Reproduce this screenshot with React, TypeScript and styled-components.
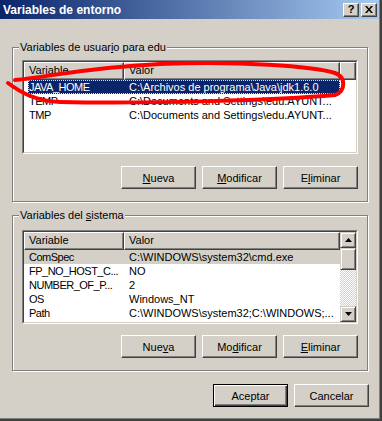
import React from 'react';
import styled, { createGlobalStyle, css } from 'styled-components';

const GlobalStyle = createGlobalStyle`
  html, body { margin: 0; padding: 0; background: #d4d0c8; }
  body { font-family: "Liberation Sans", Arial, sans-serif; font-size: 11px; color: #000; }
  * { box-sizing: border-box; }
`;

const Frame = styled.div`
  position: relative;
  width: 382px;
  height: 421px;
  background: #d4d0c8;
  border-right: 2px solid #404040;
  border-bottom: 2px solid #404040;
`;

const Inner = styled.div`
  height: 100%;
  display: flex;
  flex-direction: column;
  border-right: 1px solid #808080;
  border-bottom: 1px solid #808080;
`;

const TitleBar = styled.div`
  height: 19px;
  flex: none;
  display: flex;
  align-items: center;
  padding: 0 2px 0 3px;
  background: linear-gradient(to right, #0a246a, #a6caf0);
`;

const TitleText = styled.span`
  color: #fff;
  font-weight: bold;
  font-size: 12px;
  line-height: 14px;
`;

const CaptionButtons = styled.div`
  margin-left: auto;
  display: flex;
  gap: 2px;
`;

const bevel = css`
  background: #d4d0c8;
  border: 1px solid;
  border-color: #fff #404040 #404040 #fff;
  box-shadow: inset -1px -1px 0 #808080, inset 1px 1px 0 #d4d0c8;
`;

const CaptionButton = styled.div`
  ${bevel}
  width: 16px;
  height: 14px;
  display: flex;
  align-items: center;
  justify-content: center;
  font-weight: bold;
  font-size: 11px;
  line-height: 11px;
`;

const Client = styled.div`
  flex: 1;
  display: flex;
  flex-direction: column;
  padding: 28px 10px 0 12px;
`;

const Group = styled.div<{ $top: number; $gap?: number }>`
  position: relative;
  margin-right: 1px;
  margin-top: ${(p) => p.$gap ?? 0}px;
  border: 1px solid #808080;
  box-shadow: 1px 1px 0 #fff, inset 1px 1px 0 #fff;
  padding: ${(p) => p.$top}px 9px 12px 9px;
`;

const GroupLabel = styled.span`
  position: absolute;
  top: -7px;
  left: 6px;
  padding: 0 1px;
  line-height: 13px;
  background: #d4d0c8;
  white-space: nowrap;
`;

const ListOuter = styled.div`
  width: 336px;
  height: 94px;
  border: 1px solid;
  border-color: #808080 #fff #fff #808080;
`;

const ListInner = styled.div`
  height: 100%;
  display: flex;
  border: 1px solid;
  border-color: #404040 #d4d0c8 #d4d0c8 #404040;
  background: #fff;
  overflow: hidden;
`;

const ListBody = styled.div`
  flex: 1;
  min-width: 0;
  display: flex;
  flex-direction: column;
`;

const Header = styled.div`
  height: 18px;
  flex: none;
  display: flex;
  background: #d4d0c8;
`;

const HeaderCell = styled.div<{ $w?: number }>`
  ${(p) => (p.$w ? `width: ${p.$w}px; flex: none;` : 'flex: 1;')}
  height: 18px;
  border: 1px solid;
  border-color: #fff #404040 #404040 #fff;
  box-shadow: inset -1px -1px 0 #808080;
  padding-left: 4px;
  line-height: 15px;
  white-space: nowrap;
  overflow: hidden;
`;

const Row = styled.div<{ $sel?: 'active' | 'inactive' }>`
  position: relative;
  width: 316px;
  height: 14px;
  flex: none;
  display: flex;
  line-height: 14px;
  ${(p) =>
    p.$sel === 'active' &&
    css`
      color: #fff;
      background: linear-gradient(to right, transparent 4px, #0a246a 4px);
      &::after {
        content: '';
        position: absolute;
        left: 4px;
        top: 0;
        right: 0;
        bottom: 0;
        border: 1px dotted #e8e0b0;
      }
    `}
  ${(p) =>
    p.$sel === 'inactive' &&
    css`
      background: #d4d0c8;
    `}
`;

const Cell = styled.div<{ $w: number; $tight?: boolean }>`
  width: ${(p) => p.$w}px;
  flex: none;
  padding-left: 5px;
  white-space: nowrap;
  overflow: hidden;
  letter-spacing: ${(p) => (p.$tight ? '-0.5px' : '0')};
`;

const ScrollBar = styled.div`
  width: 16px;
  flex: none;
  display: flex;
  flex-direction: column;
`;

const scrollBevel = css`
  background: #d4d0c8;
  border: 1px solid;
  border-color: #d4d0c8 #404040 #404040 #d4d0c8;
  box-shadow: inset 1px 1px 0 #fff, inset -1px -1px 0 #808080;
`;

const ScrollButton = styled.div`
  ${scrollBevel}
  height: 16px;
  flex: none;
  display: flex;
  align-items: center;
  justify-content: center;
`;

const Thumb = styled.div`
  ${scrollBevel}
  height: 22px;
  flex: none;
`;

const Track = styled.div`
  flex: 1;
  background: repeating-conic-gradient(#d4d0c8 0 25%, #ffffff 0 50%) 0 0 / 2px 2px;
`;

const ButtonRow = styled.div<{ $mt: number }>`
  display: flex;
  justify-content: flex-end;
  gap: 6px;
  margin-top: ${(p) => p.$mt}px;
`;

const Button = styled.button<{ $default?: boolean }>`
  width: 75px;
  height: 23px;
  padding: 0;
  font-family: "Liberation Sans", Arial, sans-serif;
  font-size: 11px;
  color: #000;
  ${bevel}
  ${(p) =>
    p.$default &&
    css`
      border-color: #000;
      box-shadow: inset 1px 1px 0 #fff, inset -1px -1px 0 #404040, inset -2px -2px 0 #808080;
    `}
  u {
    text-underline-offset: 1px;
  }
`;

const Footer = styled.div`
  display: flex;
  justify-content: flex-end;
  gap: 6px;
  margin-top: 13px;
`;

const Annotation = styled.svg`
  position: absolute;
  left: 0;
  top: 0;
  pointer-events: none;
`;

const Arrow = ({ down }: { down?: boolean }) => (
  <svg width="7" height="4" viewBox="0 0 7 4">
    {down ? <path d="M0 0h7L3.5 4z" fill="#000" /> : <path d="M0 4h7L3.5 0z" fill="#000" />}
  </svg>
);

const C1 = 100;
const C2 = 216;

const userVars = [
  { n: 'JAVA_HOME', v: 'C:\\Archivos de programa\\Java\\jdk1.6.0', sel: 'active' as const },
  { n: 'TEMP', v: 'C:\\Documents and Settings\\edu.AYUNT...' },
  { n: 'TMP', v: 'C:\\Documents and Settings\\edu.AYUNT...' },
];

const sysVars = [
  { n: 'ComSpec', v: 'C:\\WINDOWS\\system32\\cmd.exe', sel: 'inactive' as const },
  { n: 'FP_NO_HOST_C...', v: 'NO' },
  { n: 'NUMBER_OF_P...', v: '2' },
  { n: 'OS', v: 'Windows_NT' },
  { n: 'Path', v: 'C:\\WINDOWS\\system32;C:\\WINDOWS;...' },
];

export default function App() {
  return (
    <>
      <GlobalStyle />
      <Frame>
        <Inner>
          <TitleBar>
            <TitleText>Variables de entorno</TitleText>
            <CaptionButtons>
              <CaptionButton>?</CaptionButton>
              <CaptionButton>
                <svg width="8" height="7" viewBox="0 0 8 7">
                  <path d="M0 0h2l2 2.4L6 0h2L5 3.5 8 7H6L4 4.6 2 7H0l3-3.5z" fill="#000" />
                </svg>
              </CaptionButton>
            </CaptionButtons>
          </TitleBar>
          <Client>
            <Group $top={12}>
              <GroupLabel>
                Variables de usuar<u>i</u>o para edu
              </GroupLabel>
              <ListOuter>
                <ListInner>
                  <ListBody>
                    <Header>
                      <HeaderCell $w={C1}>Variable</HeaderCell>
                      <HeaderCell $w={C2}>Valor</HeaderCell>
                      <HeaderCell />
                    </Header>
                    {userVars.map((r) => (
                      <Row key={r.n} $sel={r.sel}>
                        <Cell $w={C1} $tight>
                          {r.n}
                        </Cell>
                        <Cell $w={C2}>{r.v}</Cell>
                      </Row>
                    ))}
                  </ListBody>
                </ListInner>
              </ListOuter>
              <ButtonRow $mt={12}>
                <Button>
                  <u>N</u>ueva
                </Button>
                <Button>
                  <u>M</u>odificar
                </Button>
                <Button>
                  E<u>l</u>iminar
                </Button>
              </ButtonRow>
            </Group>
            <Group $top={14} $gap={13}>
              <GroupLabel>
                Variables del <u>s</u>istema
              </GroupLabel>
              <ListOuter>
                <ListInner>
                  <ListBody>
                    <Header>
                      <HeaderCell $w={C1}>Variable</HeaderCell>
                      <HeaderCell>Valor</HeaderCell>
                    </Header>
                    {sysVars.map((r) => (
                      <Row key={r.n} $sel={r.sel}>
                        <Cell $w={C1} $tight>
                          {r.n}
                        </Cell>
                        <Cell $w={C2}>{r.v}</Cell>
                      </Row>
                    ))}
                  </ListBody>
                  <ScrollBar>
                    <ScrollButton>
                      <Arrow />
                    </ScrollButton>
                    <Thumb />
                    <Track />
                    <ScrollButton>
                      <Arrow down />
                    </ScrollButton>
                  </ScrollBar>
                </ListInner>
              </ListOuter>
              <ButtonRow $mt={11}>
                <Button>
                  Nue<u>v</u>a
                </Button>
                <Button>
                  Mo<u>d</u>ificar
                </Button>
                <Button>
                  <u>E</u>liminar
                </Button>
              </ButtonRow>
            </Group>
            <Footer>
              <Button $default>Aceptar</Button>
              <Button>Cancelar</Button>
            </Footer>
          </Client>
        </Inner>
        <Annotation width="382" height="421" viewBox="0 0 382 421">
          <path
            d="M15 80 C50 77, 80 68, 160 64 C240 61, 312 66, 335 73 C346 77, 346 91, 335 95 C280 100, 150 104, 60 102 C35 101, 20 92, 8 83"
            fill="none"
            stroke="#ff0000"
            strokeWidth="4"
            strokeLinecap="round"
            strokeLinejoin="round"
          />
        </Annotation>
      </Frame>
    </>
  );
}
